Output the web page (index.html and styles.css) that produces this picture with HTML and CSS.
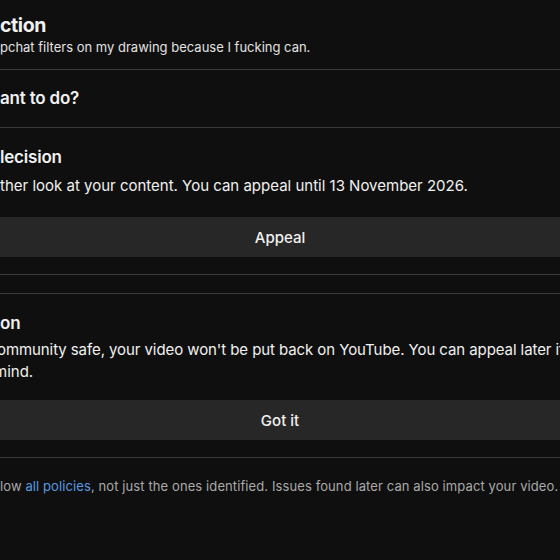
FILE: index.html
```html
<!DOCTYPE html>
<html>
<head>
<meta charset="utf-8">
<link rel="stylesheet" href="styles.css">
</head>
<body>
<div class="page">
  <div class="header">
    <div class="title">ction</div>
    <div class="subtitle">pchat filters on my drawing because I fucking can.</div>
  </div>
  <div class="section sec-q">
    <div class="heading">ant to do?</div>
  </div>
  <div class="section sec-a">
    <div class="heading">lecision</div>
    <div class="text">ther look at your content. You can appeal until 13 November 2026.</div>
    <div class="btn">Appeal</div>
  </div>
  <div class="spacer"></div>
  <div class="section sec-b">
    <div class="heading">on</div>
    <div class="text multi">
      <div class="line first">ommunity safe, your video won't be put back on YouTube. You can appeal later if you change your</div>
      <div class="line clip">mind.</div>
    </div>
    <div class="btn">Got it</div>
  </div>
  <div class="footer">low <span class="link">all policies</span>, not just the ones identified. Issues found later can also impact your video.</div>
</div>
</body>
</html>
```
FILE: styles.css
```css
html, body {
  margin: 0;
  padding: 0;
  background: #0f0f0f;
  width: 560px;
  height: 560px;
  overflow: hidden;
}
.page {
  font-family: Inter, "Noto Sans", sans-serif;
  color: #f1f1f1;
  width: 560px;
}
.header {
  padding: 12px 0 13px;
  border-bottom: 1px solid #3a3a3a;
}
.title {
  font-size: 19.5px;
  line-height: 26px;
  font-weight: 700;
  letter-spacing: -0.4px;
}
.subtitle {
  font-size: 13px;
  line-height: 18px;
  color: #e2e2e2;
}
.section {
  border-bottom: 1px solid #3a3a3a;
}
.sec-q {
  padding: 16px 0 17px;
}
.sec-a {
  padding: 17px 0 17px;
}
.sec-b {
  padding: 17px 0 17px;
}
.heading {
  font-size: 17px;
  line-height: 24px;
  font-weight: 600;
  letter-spacing: -0.2px;
}
.text {
  font-size: 15px;
  line-height: 20px;
  margin-top: 7px;
  white-space: nowrap;
}
.text.multi {
  line-height: 22px;
  margin-top: 4px;
}
.line.first {
  margin-left: -3px;
  letter-spacing: -0.08px;
}
.line.clip {
  margin-left: -6px;
}
.btn {
  height: 40px;
  margin-top: 21px;
  background: #272727;
  display: flex;
  align-items: center;
  justify-content: center;
  font-size: 15px;
  font-weight: 500;
  margin-left: -20px;
  margin-right: -20px;
}
.sec-b .btn {
  margin-top: 17px;
}
.spacer {
  height: 18px;
  border-bottom: 1px solid #3a3a3a;
}
.footer {
  padding-top: 19px;
  font-size: 13px;
  line-height: 18px;
  color: #aaaaaa;
  white-space: nowrap;
  letter-spacing: 0.1px;
}
.link {
  color: #5a9ae0;
}
```
